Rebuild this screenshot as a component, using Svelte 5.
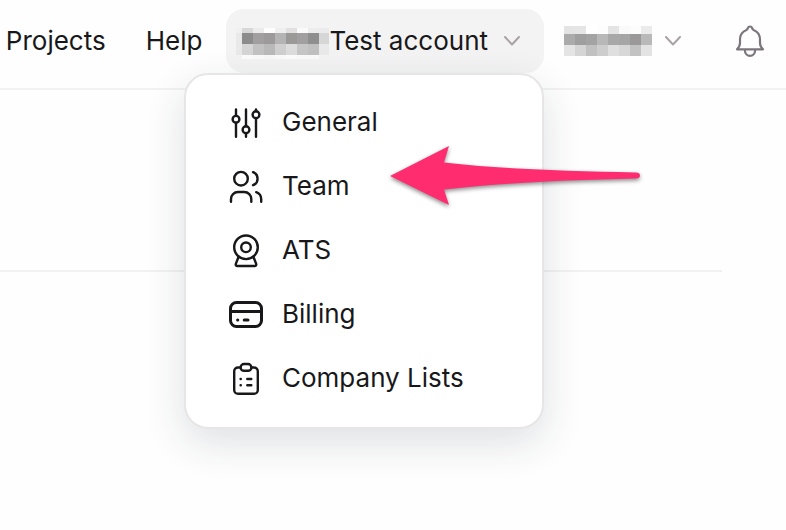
<script>
    let open = $state(true);

    const menu = [
        {icon: "sliders", label: "General"},
        {icon: "team", label: "Team"},
        {icon: "ats", label: "ATS"},
        {icon: "billing", label: "Billing"},
        {icon: "lists", label: "Company Lists"}
    ];

    // shades of the pixelated names, row by row
    const companyRows = [
        {y: 0, h: 5, cells: ["#f0f0f0", "#d8d8d8", "#ebebeb", "#fdfdfd", "#efefef", "#e1dfe0", "#fafafa", "#ededed", "#ebebeb"]},
        {y: 5, h: 11, cells: ["#e9e9e9", "#8c8c8c", "#a29fa0", "#9d9a9b", "#b4b4b4", "#9b9898", "#a29fa0", "#8f8f8f", "#d6d6d6"]},
        {y: 16, h: 11, cells: ["#e9e9e9", "#d6d5d5", "#c2c2c2", "#b9b9b9", "#cfcfcf", "#dcdcdc", "#c6c6c6", "#c0c0c0", "#e9e9e9"]},
        {y: 27, h: 4, cells: ["#f3f3f3", "#fcfcfc", "#fafafa", "#f8f8f8", "#fafafa", "#fcfcfc", "#fafafa", "#fafafa", "#f3f3f3"]}
    ];
    const userRows = [
        {y: 0, h: 8, cells: ["#e4e4e4", "#e5e5e5", "#ffffff", "#fdfdfd", "#e4e4e4", "#fafafa", "#fcfcfc", "#ebebeb"]},
        {y: 8, h: 11, cells: ["#ababab", "#9f9f9f", "#a3a3a3", "#b8b8b8", "#a8a8a8", "#a6a6a6", "#9b9899", "#b9b9b9"]},
        {y: 19, h: 11, cells: ["#e4e4e4", "#d5d5d5", "#c1c1c1", "#cdcdcd", "#dfdfdf", "#d7d7d7", "#c2c2c2", "#e3e3e3"]}
    ];
</script>

{#snippet mosaic(rows)}
    {#each rows as row}
        {#each row.cells as fill, i}
            <rect x={i * 11} y={row.y} width="11" height={row.h} {fill} />
        {/each}
    {/each}
{/snippet}

{#snippet chevron()}
    <svg class="chevron" viewBox="0 0 16 10" aria-hidden="true">
        <path d="M1 1l7 7.5L15 1" />
    </svg>
{/snippet}

<div class="page">
    <header>
        <nav>
            <a href="#projects">Projects</a>
            <a href="#help">Help</a>
        </nav>
        <div class="account">
            <button class="account-button" aria-expanded={open} onclick={() => {open = !open}}>
                <svg class="company" viewBox="5 0 93 31" shape-rendering="crispEdges" aria-hidden="true">
                    {@render mosaic(companyRows)}
                </svg>
                <span>Test account</span>
                {@render chevron()}
            </button>
            {#if open}
                <ul class="dropdown">
                    {#each menu as item}
                        <li>
                            <a href="#{item.icon}">
                                <svg class="icon" viewBox="0 0 36 36" aria-hidden="true">
                                    {#if item.icon === "sliders"}
                                        <path d="M8 5.5v6.3M8 18.8v14M18 5.5v16.7M18 29.2v3.6M28 5.5v1.7M28 14.2v18.6" />
                                        <circle cx="8" cy="15.3" r="3.4" />
                                        <circle cx="18" cy="25.7" r="3.4" />
                                        <circle cx="28" cy="10.7" r="3.4" />
                                    {:else if item.icon === "team"}
                                        <circle cx="13" cy="10.7" r="6.8" />
                                        <path d="M25 4.2a6.9 6.9 0 0 1 0 13M3 33.8V31a7 7 0 0 1 7-7h6.3a7 7 0 0 1 7 7v2.8M28.2 24.2a7.4 7.4 0 0 1 5 6.8v2.8" />
                                    {:else if item.icon === "ats"}
                                        <circle cx="18" cy="15.3" r="11.8" />
                                        <circle cx="18" cy="15.3" r="4.8" />
                                        <path d="M10.4 25.2l-2.5 6.4c-.5 1.3.2 2.4 1.5 2.4h17.2c1.3 0 2-1.1 1.5-2.4l-2.5-6.4" />
                                    {:else if item.icon === "billing"}
                                        <g class="bold">
                                            <rect x="2.5" y="6.5" width="31" height="24" rx="6" />
                                            <path d="M3 15.4h30M9.6 24h.2M16.2 24h3.8" />
                                        </g>
                                    {:else}
                                        <path d="M12.5 7.5H10a3.8 3.8 0 0 0-3.8 3.8V30a3.8 3.8 0 0 0 3.8 3.8h16a3.8 3.8 0 0 0 3.8-3.8V11.3A3.8 3.8 0 0 0 26 7.5h-2.5" />
                                        <rect x="12.6" y="4" width="10.8" height="6.8" rx="3.4" />
                                        <path d="M12.6 19h.2M19.3 19h4M12.6 25.3h.2M19.3 25.3h4" />
                                    {/if}
                                </svg>
                                {item.label}
                            </a>
                        </li>
                    {/each}
                </ul>
            {/if}
        </div>
        <button class="user" aria-label="User menu">
            <svg class="name" viewBox="0 0 88 30" shape-rendering="crispEdges" aria-hidden="true">
                {@render mosaic(userRows)}
            </svg>
            {@render chevron()}
        </button>
        <button class="bell" aria-label="Notifications">
            <svg viewBox="0 0 30 34" aria-hidden="true">
                <path d="M2 25.3c2-1.8 3-3.6 3-6.3v-3.5c0-4.8 2.3-7.8 6-9.3 1.3-.6 1.700-1.200 2-2.300.5-1.900 3.500-1.900 4 0 .3 1.100.7 1.700 2 2.300 3.700 1.500 6 4.500 6 9.300V19c0 2.700 1 4.500 3 6.300zM9.800 25.500c0 8.500 10.400 8.500 10.400 0" />
            </svg>
        </button>
    </header>

    <main>
        <section></section>
        <svg class="arrow" viewBox="0 0 252 62" aria-hidden="true">
            <path d="M1 31L60 1l-5 16.500C110 24 180 26 247 27.500q4 0 4 3t-4 3C180 35 110 38 55 44.500L60 60z" />
        </svg>
    </main>
</div>

<style>
:global(body) {
    background: #fefefe;
}
.page {
    min-height: 100vh;
    font-family: Inter, "Liberation Sans", sans-serif;
    font-size: 26px;
    line-height: 32px;
    color: #18181a;
}
header {
    display: flex;
    justify-content: flex-end;
    align-items: center;
    height: 82px;
    padding: 0 21px 6px 0;
    border-bottom: 2px solid #f2f2f2;
}
a {
    color: inherit;
    text-decoration: none;
}
button {
    display: flex;
    align-items: center;
    padding: 0;
    border: 0;
    background: none;
    font: inherit;
    color: inherit;
    cursor: pointer;
}
svg {
    display: block;
    flex: none;
    fill: none;
    stroke-linecap: round;
    stroke-linejoin: round;
}
nav {
    display: flex;
    gap: 40px;
    margin-right: 24px;
}
.account {
    position: relative;
    margin-right: 20px;
}
.account-button {
    height: 64px;
    padding: 0 24px 0 10px;
    border-radius: 18px;
    background: #f3f3f3;
    white-space: nowrap;
}
.company {
    width: 93px;
    height: 31px;
    margin-top: 4px;
}
.chevron {
    width: 16px;
    height: 10px;
    margin-left: 16px;
    stroke: #a9a3a8;
    stroke-width: 2;
}
.user {
    margin-right: 54px;
}
.name {
    width: 88px;
    height: 30px;
}
.user .chevron {
    margin-left: 13px;
}
.bell svg {
    width: 30px;
    height: 34px;
    stroke: #7c767c;
    stroke-width: 2.2;
}

/* Account menu */
.dropdown {
    position: absolute;
    top: 100%;
    right: 0;
    z-index: 1;
    box-sizing: border-box;
    width: 360px;
    margin: 0;
    padding: 15px 0 17px;
    list-style: none;
    background: #fff;
    border: 2px solid #e8e5e7;
    border-radius: 24px;
    box-shadow: 0 14px 40px rgba(30, 45, 60, 0.14);
}
.dropdown a {
    display: flex;
    align-items: center;
    gap: 18px;
    height: 64px;
    padding: 0 42px;
}
.icon {
    width: 36px;
    height: 36px;
    stroke: #18181a;
    stroke-width: 2.4;
}
.bold {
    stroke-width: 3;
}

/* Page below the header */
main {
    position: relative;
}
section {
    height: 180px;
    margin-right: 64px;
    border-bottom: 2px solid #f2f2f2;
}
.arrow {
    position: absolute;
    top: 55px;
    right: 145px;
    z-index: 2;
    width: 252px;
    height: 62px;
    overflow: visible;
    fill: #ff2d6f;
    filter: drop-shadow(0 2px 2px rgba(0, 0, 0, 0.45));
    pointer-events: none;
}
</style>
